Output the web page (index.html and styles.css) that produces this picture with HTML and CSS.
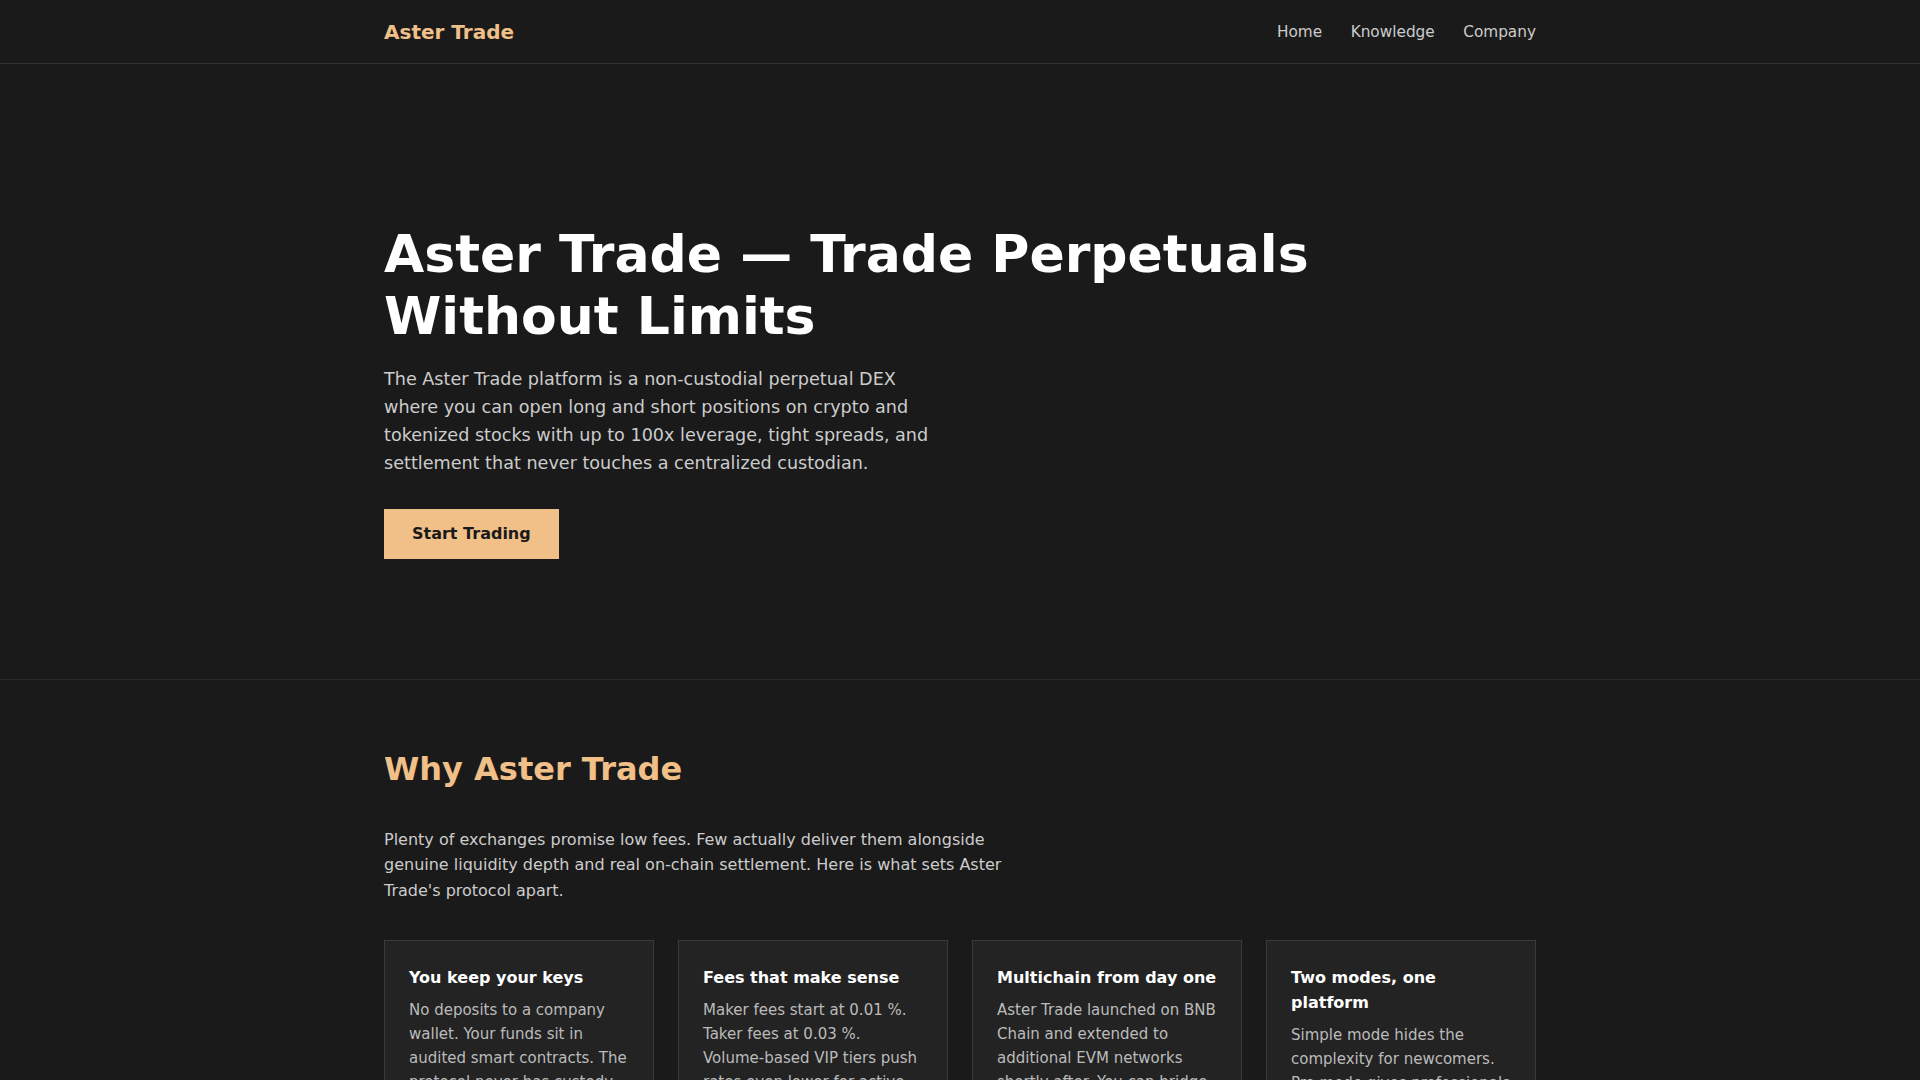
FILE: index.html
```html
<!DOCTYPE html>
<html lang="en">
<head>
<meta charset="utf-8">
<title>Aster Trade</title>
<link rel="stylesheet" href="styles.css">
</head>
<body>
<header class="site-header">
  <div class="container header-inner">
    <a class="logo" href="#">Aster Trade</a>
    <nav class="nav">
      <a href="#">Home</a>
      <a href="#">Knowledge</a>
      <a href="#">Company</a>
    </nav>
  </div>
</header>
<section class="hero">
  <div class="container">
    <h1 class="hero-title">Aster Trade — Trade Perpetuals Without Limits</h1>
    <p class="hero-text">The Aster Trade platform is a non-custodial perpetual DEX where you can open long and short positions on crypto and tokenized stocks with up to 100x leverage, tight spreads, and settlement that never touches a centralized custodian.</p>
    <a class="btn" href="#">Start Trading</a>
  </div>
</section>
<section class="why">
  <div class="container">
    <h2 class="section-title">Why Aster Trade</h2>
    <p class="section-text">Plenty of exchanges promise low fees. Few actually deliver them alongside genuine liquidity depth and real on-chain settlement. Here is what sets Aster Trade's protocol apart.</p>
    <div class="cards">
      <div class="card">
        <h3 class="card-title">You keep your keys</h3>
        <p class="card-text">No deposits to a company wallet. Your funds sit in audited smart contracts. The protocol never has custody of your assets, and you can withdraw at any time.</p>
      </div>
      <div class="card">
        <h3 class="card-title">Fees that make sense</h3>
        <p class="card-text">Maker fees start at 0.01 %. Taker fees at 0.03 %. Volume-based VIP tiers push rates even lower for active traders and market makers.</p>
      </div>
      <div class="card">
        <h3 class="card-title">Multichain from day one</h3>
        <p class="card-text">Aster Trade launched on BNB Chain and extended to additional EVM networks shortly after. You can bridge collateral without leaving the app.</p>
      </div>
      <div class="card">
        <h3 class="card-title">Two modes, one platform</h3>
        <p class="card-text">Simple mode hides the complexity for newcomers. Pro mode gives professionals a full order book, advanced orders and charting.</p>
      </div>
    </div>
  </div>
</section>
</body>
</html>
```

FILE: styles.css
```css
* { box-sizing: border-box; }

html, body {
  margin: 0;
  padding: 0;
  background: #1a1a1a;
  color: #e6e6e6;
  font-family: "DejaVu Sans", Verdana, sans-serif;
}

a { text-decoration: none; }

.container {
  max-width: 1152px;
  margin: 0 auto;
}

.site-header {
  border-bottom: 1px solid #333333;
}

.header-inner {
  height: 63px;
  display: flex;
  align-items: center;
  justify-content: space-between;
}

.logo {
  color: #f0c088;
  font-weight: 700;
  font-size: 20px;
}

.nav {
  display: flex;
  gap: 28.5px;
}

.nav a {
  color: #cccccc;
  font-size: 15.3px;
}

.hero {
  padding: 160px 0 120px;
  border-bottom: 1px solid #2b2b2b;
}

.hero-title {
  margin: 0 0 17px;
  font-size: 52px;
  line-height: 1.19;
  font-weight: 700;
  color: #ffffff;
}

.hero-text {
  margin: 0 0 32px;
  max-width: 560px;
  font-size: 17.6px;
  line-height: 1.6;
  color: #cccccc;
}

.btn {
  display: inline-block;
  background: #f0c088;
  color: #1a1a1a;
  font-weight: 700;
  font-size: 16px;
  padding: 15px 28px 16px;
}

.why {
  padding: 70px 0 80px;
}

.section-title {
  margin: 0 0 38px;
  font-size: 32px;
  line-height: 1.2;
  font-weight: 700;
  color: #f0c088;
}

.section-text {
  margin: 0 0 37px;
  max-width: 640px;
  font-size: 16px;
  line-height: 1.6;
  color: #cccccc;
}

.cards {
  display: grid;
  grid-template-columns: repeat(4, 1fr);
  gap: 24px;
}

.card {
  background: #232323;
  border: 1px solid #3a3a3a;
  padding: 25px 24px 24px;
}

.card-title {
  margin: 0 0 7px;
  font-size: 16px;
  line-height: 1.55;
  font-weight: 700;
  color: #ffffff;
}

.card-text {
  margin: 0;
  font-size: 15px;
  line-height: 1.6;
  color: #bbbbbb;
}
```
